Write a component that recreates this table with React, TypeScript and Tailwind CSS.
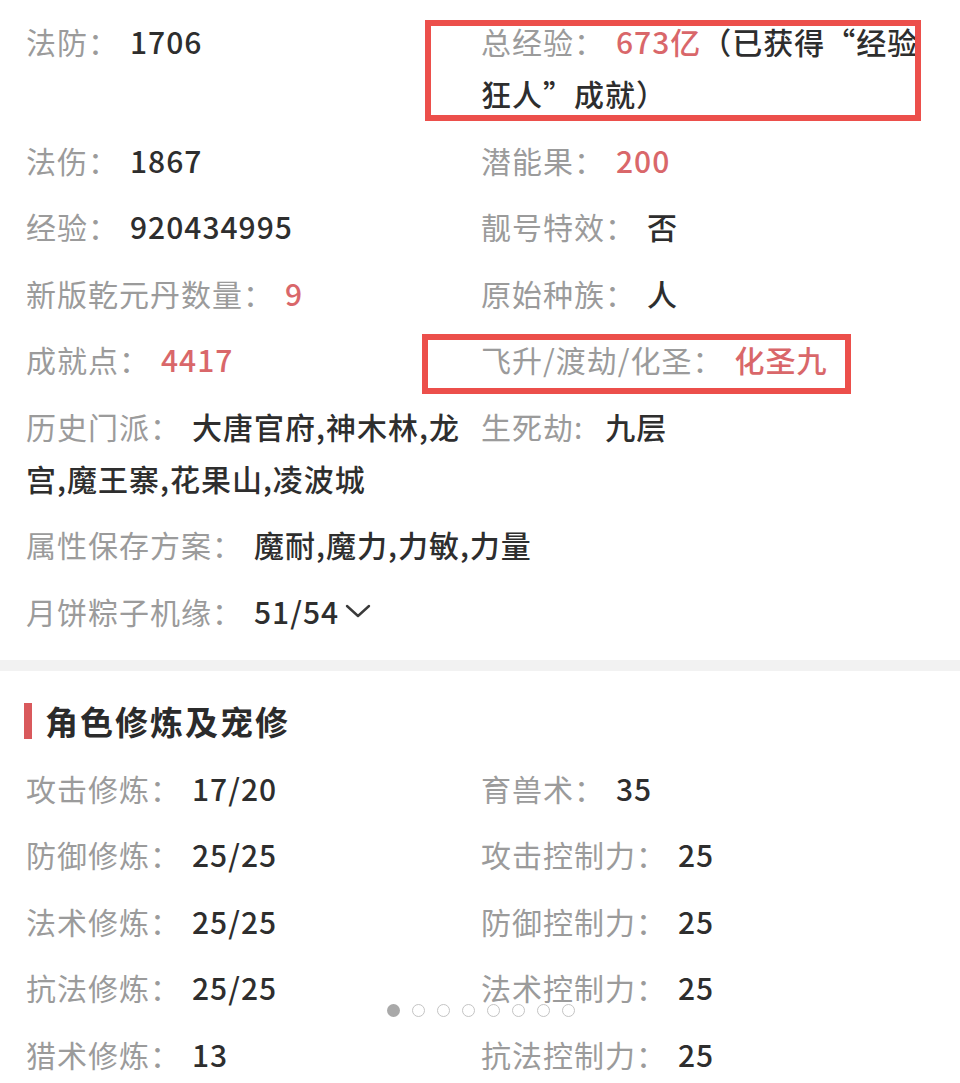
import React from 'react';

type Item = {
    label: string;
    value: string;
    tone?: 'dark' | 'red';
    tail?: string;
    compact?: boolean;
    wide?: boolean;
};

const topItems: Item[] = [
    { label: '法防：', value: '1706' },
    { label: '总经验：', value: '673亿', tone: 'red', tail: '（已获得“经验狂人”成就）' },
    { label: '法伤：', value: '1867' },
    { label: '潜能果：', value: '200', tone: 'red' },
    { label: '经验：', value: '920434995' },
    { label: '靓号特效：', value: '否' },
    { label: '新版乾元丹数量：', value: '9', tone: 'red' },
    { label: '原始种族：', value: '人' },
    { label: '成就点：', value: '4417', tone: 'red' },
    { label: '飞升/渡劫/化圣：', value: '化圣九', tone: 'red' },
    { label: '历史门派：', value: '大唐官府,神木林,龙宫,魔王寨,花果山,凌波城' },
    { label: '生死劫:', value: '九层', compact: true },
    { label: '属性保存方案：', value: '魔耐,魔力,力敏,力量', wide: true },
];

const cultivation: Item[] = [
    { label: '攻击修炼：', value: '17/20' },
    { label: '育兽术：', value: '35' },
    { label: '防御修炼：', value: '25/25' },
    { label: '攻击控制力：', value: '25' },
    { label: '法术修炼：', value: '25/25' },
    { label: '防御控制力：', value: '25' },
    { label: '抗法修炼：', value: '25/25' },
    { label: '法术控制力：', value: '25' },
    { label: '猎术修炼：', value: '13' },
    { label: '抗法控制力：', value: '25' },
];

function Field({ item }: { item: Item }) {
    return (
        <div className={item.wide ? 'col-span-2 leading-[52px]' : 'leading-[52px]'}>
            <span className={item.compact ? 'mr-[22px] text-[#9b9b9b]' : 'mr-[11px] text-[#9b9b9b]'}>{item.label}</span>
            <span className={item.tone === 'red' ? 'font-medium text-[#d9676a]' : 'font-medium text-[#2e2e2e]'}>
                {item.value}
            </span>
            {item.tail && <span className="font-medium text-[#2e2e2e]">{item.tail}</span>}
        </div>
    );
}

function Dots() {
    return (
        <div className="absolute left-[387px] top-[1004px] flex gap-[12px]">
            <span className="h-[13px] w-[13px] rounded-full bg-[#a9a9a9]" />
            {[0, 1, 2, 3, 4, 5, 6].map((i) => (
                <span key={i} className="h-[13px] w-[13px] rounded-full border border-[#c4c4c4] bg-white/60" />
            ))}
        </div>
    );
}

export default function App() {
    return (
        <div
            className="relative h-[1083px] w-[960px] overflow-hidden bg-white text-[30px] tracking-[1px]"
            style={{ fontFamily: '"Noto Sans CJK SC", "Noto Sans", sans-serif' }}
        >
            <div className="pl-[26px] pr-[24px] pt-[15px] pb-[23px]">
                <div className="grid grid-cols-[455px_455px] gap-y-[14.5px]">
                    {topItems.map((item, i) => (
                        <Field key={i} item={item} />
                    ))}
                    <div className="col-span-2 flex items-center leading-[52px]">
                        <span className="mr-[11px] text-[#9b9b9b]">月饼粽子机缘：</span>
                        <span className="font-medium text-[#2e2e2e]">51/54</span>
                        <svg width="26" height="16" viewBox="0 0 26 16" className="ml-[6px]">
                            <polyline points="2,3 13,13 24,3" fill="none" stroke="#3a3a3a" strokeWidth="2.4" strokeLinecap="round" strokeLinejoin="round" />
                        </svg>
                    </div>
                </div>
            </div>

            <div className="h-[11px] bg-[#f2f2f2]" />

            <div className="pl-[26px] pr-[24px] pt-[32px]">
                <div className="-ml-[2px] flex items-center gap-[13px]">
                    <div className="h-[36px] w-[8px] bg-[#d9595c]" />
                    <h2 className="text-[33px] font-bold leading-[36px] tracking-[2px] text-[#2b2b2b]">角色修炼及宠修</h2>
                </div>
                <div className="mt-[23px] grid grid-cols-[455px_455px] gap-y-[14.5px]">
                    {cultivation.map((item, i) => (
                        <Field key={i} item={item} />
                    ))}
                </div>
            </div>

            {/* annotation boxes */}
            <div className="absolute left-[425px] top-[20px] h-[101px] w-[496px] border-[6px] border-[#ec4f4b]" />
            <div className="absolute left-[422px] top-[334px] h-[60px] w-[429px] border-[6px] border-[#ec4f4b]" />

            <Dots />
        </div>
    );
}
